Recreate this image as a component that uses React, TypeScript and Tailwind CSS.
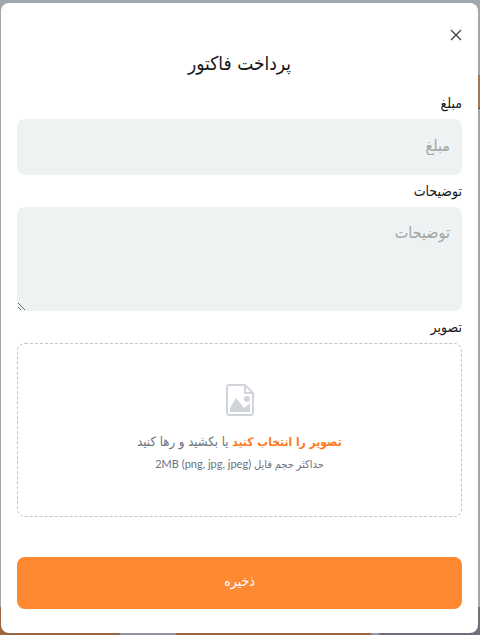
import { useState } from 'react';

function CloseIcon() {
  return (
    <svg viewBox="0 0 12 12" className="h-3 w-3" fill="none" stroke="#3f3f3f" strokeWidth="1.3" aria-hidden="true">
      <path d="M1 1l10 10M11 1L1 11" />
    </svg>
  );
}

function ImageFileIcon() {
  return (
    <svg viewBox="0 0 28 32" className="h-8 w-7" aria-hidden="true">
      <path
        d="M3 1h16l8 8v20a2 2 0 0 1-2 2H3a2 2 0 0 1-2-2V3a2 2 0 0 1 2-2z"
        fill="none"
        stroke="#d1d5db"
        strokeWidth="2"
      />
      <path d="M19 1v8h8" fill="none" stroke="#d1d5db" strokeWidth="2" />
      <path d="M4 28v-4l6-10 8 10 6-5v9z" fill="#d1d5db" />
      <circle cx="21" cy="15" r="3" fill="#d1d5db" />
    </svg>
  );
}

// Dimmed page that shows around the edges of the modal
function Backdrop() {
  return (
    <div className="absolute inset-0 flex flex-col bg-[#a0a7af]" aria-hidden="true">
      <div className="h-[75px]" />
      <div className="h-[34px] w-1 self-end border-b border-[#4b4b50] bg-[#a07856]" />
      <div className="flex-1" />
      <div className="flex h-7">
        <div className="w-1/4 bg-[#9c6644]" />
        <div className="w-14 bg-[#8f959d]" />
        <div className="flex-1 bg-[#9c6644]" />
        <div className="w-2 bg-[#9299a1]" />
        <div className="w-[101px] bg-[#6b7079]" />
      </div>
    </div>
  );
}

export default function App() {
  const [amount, setAmount] = useState('');
  const [description, setDescription] = useState('');

  return (
    <div className="relative min-h-screen pt-[3px] pr-[2px] pb-[2px] pl-px font-['DejaVu_Sans_Condensed','DejaVu_Sans',sans-serif]">
      <Backdrop />
      <div
        dir="rtl"
        lang="fa"
        role="dialog"
        aria-labelledby="title"
        className="relative rounded-lg bg-white px-4 py-6"
      >
        <button type="button" aria-label="بستن" className="flex h-4 items-center">
          <CloseIcon />
        </button>
        <h1 id="title" className="mt-1 text-center text-[19px] leading-8 text-[#171717]">
          پرداخت فاکتور
        </h1>

        <form onSubmit={e => e.preventDefault()} className="mt-2">
          <label htmlFor="amount" className="block h-8 text-sm leading-8 text-[#171717]">
            مبلغ
          </label>
          <input
            id="amount"
            value={amount}
            onChange={e => setAmount(e.target.value)}
            placeholder="مبلغ"
            className="block h-14 w-full rounded-lg bg-[#eef2f3] px-3 pb-1 text-base placeholder:text-[#a3a3a3]"
          />

          <label htmlFor="description" className="block h-8 text-sm leading-8 text-[#171717]">
            توضیحات
          </label>
          <textarea
            id="description"
            value={description}
            onChange={e => setDescription(e.target.value)}
            placeholder="توضیحات"
            className="block h-26 w-full rounded-lg bg-[#eef2f3] px-3 py-3.5 text-base placeholder:text-[#a3a3a3]"
          />

          <label htmlFor="image" className="block h-8 text-sm leading-8 text-[#171717]">
            تصویر
          </label>
          <div className="flex flex-col items-center rounded-lg border border-dashed border-[#c4c4c4] py-10">
            <ImageFileIcon />
            <p className="mt-4 text-[13px] leading-5 text-[#6b7280]">
              <label htmlFor="image" className="cursor-pointer text-xs font-bold text-[#ff7a1a]">
                تصویر را انتخاب کنید
              </label>
              <input id="image" type="file" accept=".png,.jpg,.jpeg" className="sr-only" />{' '}
              یا بکشید و رها کنید
            </p>
            <p className="font-[Lato,'DejaVu_Sans_Condensed',sans-serif] text-[11px] leading-6 text-[#6b7280]">
              حداکثر حجم فایل (png, jpg, jpeg) 2MB
            </p>
          </div>

          <button type="submit" className="mt-10 h-13 w-full rounded-lg bg-[#ff8833] pb-1 text-sm text-white">
            ذخیره
          </button>
        </form>
      </div>
    </div>
  );
}
